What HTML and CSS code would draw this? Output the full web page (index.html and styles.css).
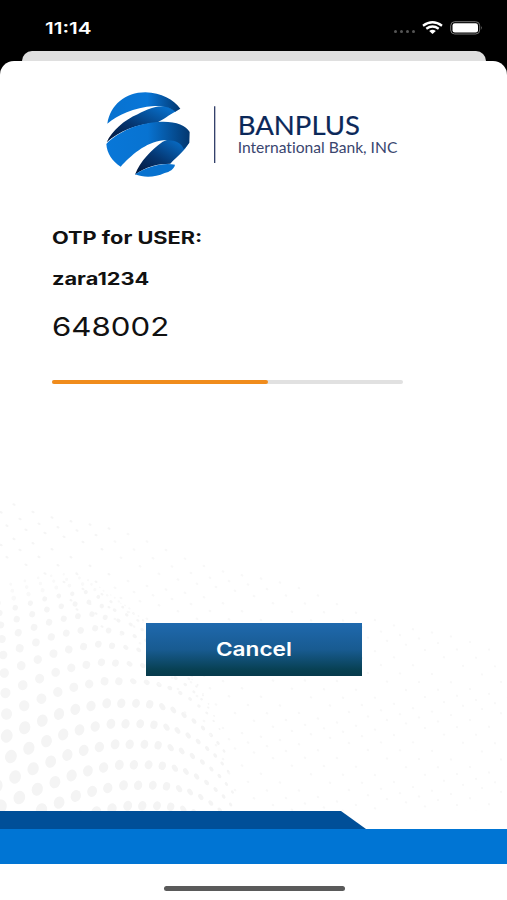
FILE: index.html
```html
<!DOCTYPE html>
<html lang="en">
<head>
    <meta charset="UTF-8">
    <meta name="viewport" content="width=device-width, initial-scale=1.0">
    <title>Banplus OTP</title>
    <link rel="stylesheet" href="styles.css">
</head>
<body>
    <header class="status-bar">
        <span class="time">11:14</span>
        <div class="status-icons">
            <div class="signal"><i></i><i></i><i></i><i></i></div>
            <svg class="wifi" viewBox="0 0 21 13" width="21" height="13">
                <g fill="none" stroke="#fff" stroke-width="2.3">
                    <path d="M1 4.7 Q10.500 -2.300 20 4.700"/>
                    <path d="M4.300 7.800 Q10.500 3.300 16.700 7.800"/>
                </g>
                <path d="M7.200 10 Q10.500 7.500 13.800 10 L10.500 12.900 Z" fill="#fff"/>
            </svg>
            <svg class="battery" viewBox="0 0 33 14" width="33" height="14">
                <rect x="0.700" y="0.700" width="29" height="12.300" rx="4" fill="none" stroke="#777" stroke-width="1"/>
                <rect x="2.500" y="2.300" width="25.500" height="9.200" rx="2.300" fill="#fff"/>
                <path d="M31 5 Q32.600 6.800 31 8.700 Z" fill="#777"/>
            </svg>
        </div>
    </header>

    <div class="back-card"></div>

    <main class="sheet">
        <svg class="dots" id="dots" viewBox="0 0 507 750" width="507" height="750"></svg>

        <svg class="logo" viewBox="0 0 930 300" width="310" height="100">
            <defs>
                <linearGradient id="top" x1="0" y1="0.500" x2="1" y2="0.500">
                    <stop offset="0" stop-color="#0872cf"/>
                    <stop offset="0.550" stop-color="#0876d8"/>
                    <stop offset="1" stop-color="#03376f"/>
                </linearGradient>
                <linearGradient id="fold" x1="0" y1="1" x2="0.900" y2="0">
                    <stop offset="0" stop-color="#021538"/>
                    <stop offset="0.450" stop-color="#05356f"/>
                    <stop offset="1" stop-color="#0874d2"/>
                </linearGradient>
                <linearGradient id="band" x1="0" y1="0.500" x2="1" y2="0.500">
                    <stop offset="0" stop-color="#0877d8"/>
                    <stop offset="0.500" stop-color="#0873d1"/>
                    <stop offset="1" stop-color="#03376f"/>
                </linearGradient>
            </defs>
            <path d="M35 172 C50 138 88 105 128 88 C155 72 185 62 215 63 L243 79 C222 90 203 106 186 113 C125 116 72 138 35 172 Z" fill="url(#fold)"/>
            <path d="M37 116 C46 60 91 22 151 22 C200 23 235 44 256 71 L241 80 C227 68 210 61 178 63 C115 67 68 91 37 116 Z" fill="url(#top)"/>
            <path d="M120 269 C137 226 168 196 203 170 C237 155 261 160 282 172 C270 198 248 213 226 236 C190 236 150 245 120 269 Z" fill="url(#fold)"/>
            <path d="M34 177 C67 142 128 114 190 111 C239 108 272 120 284 141 L283 173 C278 180 272 187 266 192 C259 172 238 163 205 166 C150 172 107 213 77 245 C51 228 36 205 34 177 Z" fill="url(#band)"/>
            <path d="M120 268 C153 245 205 231 240 239 C237 253 224 260 209 264 C179 278 146 278 120 268 Z" fill="#0872cf"/>
            <path d="M359 64 V234" stroke="#34416b" stroke-width="4"/>
            <text class="logo-name" x="428" y="150" textLength="367" lengthAdjust="spacingAndGlyphs">BANPLUS</text>
            <text class="logo-sub" x="428" y="205" textLength="479" lengthAdjust="spacingAndGlyphs">International Bank, INC</text>
        </svg>

        <section class="otp">
            <p class="otp-title">OTP for USER:</p>
            <p class="otp-user">zara1234</p>
            <p class="otp-code">648002</p>
            <div class="progress"><div class="progress-fill"></div></div>
        </section>

        <button class="cancel" type="button"><span>Cancel</span></button>

        <footer class="bottom">
            <div class="band-dark"></div>
            <div class="band-blue"></div>
            <div class="home-indicator"></div>
        </footer>
    </main>

    <script src="dots.js"></script>
</body>
</html>
```
FILE: styles.css
```css
* {
    box-sizing: border-box;
}
body {
    margin: 0;
    height: 900px;
    overflow: hidden;
    background-color: #000;
    color: #111;
    font-family: Inter, "Liberation Sans", sans-serif;
    display: flex;
    flex-direction: column;
}
.status-bar {
    height: 51px;
    flex: none;
    padding: 4px 24px 0 45px;
    display: flex;
    align-items: center;
    justify-content: space-between;
    color: #fff;
}
.time {
    font-size: 16px;
    font-weight: 600;
    transform: scaleX(1.290);
    transform-origin: left;
}
.status-icons {
    display: flex;
    align-items: center;
}
.signal {
    display: flex;
    gap: 3px;
    margin: 8px 7px 0 0;
}
.signal i {
    width: 3px;
    height: 3px;
    border-radius: 50%;
    background-color: #555;
}
.wifi {
    margin-right: 7px;
}
.back-card {
    flex: none;
    height: 10px;
    margin: 0 21px 0 22px;
    background-color: #dfdfdf;
    border-radius: 11px 11px 0 0;
}
.sheet {
    position: relative;
    flex: 1;
    display: flex;
    flex-direction: column;
    background-color: #fff;
    border-radius: 14px 14px 0 0;
    overflow: hidden;
}
.dots {
    position: absolute;
    top: 0;
    left: 0;
}
.logo {
    flex: none;
    margin: 24px 0 0 95px;
}
.logo-name {
    font-family: Lato, sans-serif;
    font-size: 80px;
    font-weight: 400;
    fill: #0b2859;
    stroke: #0b2859;
    stroke-width: 0.500px;
}
.logo-sub {
    font-family: Lato, sans-serif;
    font-size: 43px;
    font-variant-ligatures: none;
    fill: #3a466f;
}
.otp {
    margin: 41px 104px 0 52px;
}
.otp p {
    margin: 0;
    width: max-content;
    transform-origin: left;
}
.otp .otp-title,
.otp .otp-user {
    font-size: 17px;
    font-weight: 700;
    line-height: 24px;
    transform: scaleX(1.280);
}
.otp .otp-user {
    margin-top: 17px;
}
.otp .otp-code {
    margin-top: 18px;
    font-size: 26px;
    line-height: 36px;
    transform: scaleX(1.200);
}
.progress {
    margin-top: 35px;
    height: 4px;
    border-radius: 2px;
    background-color: #e1e1e1;
}
.progress-fill {
    width: 61.500%;
    height: 100%;
    border-radius: 2px;
    background-color: #f08c1c;
}
.cancel {
    position: relative;
    align-self: center;
    width: 216px;
    height: 53px;
    margin-top: 239px;
    border: none;
    background: linear-gradient(#1f69ae, #185b91 50%, #073f50 90%, #073a4c);
    color: #fff;
    font-family: inherit;
    font-size: 19px;
    font-weight: 600;
}
.cancel span {
    display: inline-block;
    transform: scaleX(1.190);
}
.bottom {
    position: relative;
    margin-top: auto;
    height: 89px;
    display: flex;
    flex-direction: column;
    background: linear-gradient(transparent 18px, #fff 18px);
}
.band-dark {
    width: 366px;
    height: 18px;
    background-color: #004f98;
    clip-path: polygon(0 0, 341px 0, 100% 100%, 0 100%);
}
.band-blue {
    height: 35px;
    background-color: #0075d4;
}
.home-indicator {
    width: 181px;
    height: 5px;
    margin: 22px 0 0 164px;
    border-radius: 3px;
    background-color: #5a5a5a;
}
```
FILE: dots.js
```js
// halftone wave behind the content, rows of dots stepping up and fading out
const svg = document.getElementById("dots");
const row = [
    [-30, 755], [-12, 745], [6.7, 736], [24.7, 727.7], [42.3, 720.7], [59, 714], [75.3, 709.3],
    [91, 706], [106.7, 703.3], [121.3, 703.3], [136, 703.3], [149.7, 704.3], [162.3, 706.7],
    [173.3, 710], [184, 715], [194, 721], [203, 728], [211, 735], [218, 743], [224, 751]
];

function dot(x, y, rx, ry, angle, color) {
    const e = document.createElementNS("http://www.w3.org/2000/svg", "ellipse");
    e.setAttribute("rx", rx);
    e.setAttribute("ry", ry);
    e.setAttribute("fill", color);
    e.setAttribute("transform", `translate(${x} ${y - 61}) rotate(${angle})`);
    svg.appendChild(e);
}

// big dots going down
for (let r = 0; r < 6; r++) {
    row.forEach(([x, y], i) => {
        const size = Math.max(1.2, 7.4 - i * 0.29);
        dot(x + r * 4.2, y + r * 20.5, size * (i > 11 ? 0.65 : 0.85), size, i > 11 ? -35 : 18, "#f4f4f4");
    });
}

// rows above get closer together and smaller
const steps = [22, 43, 63, 81, 97, 111, 123, 133, 141, 148];
steps.forEach((up, r) => {
    const squeeze = 1 - (r + 1) * 0.02;
    row.forEach(([x, y], i) => {
        const size = Math.max(0.9, (7 - i * 0.3) * (1 - r * 0.08));
        const flat = 1 - r * 0.06;
        dot(x * squeeze - r, 736 - up + (y - 736) * flat + Math.max(0, i - 8) * r * 0.8,
            size * 0.85, size * (i > 9 ? 0.65 : 0.9), i > 9 ? 35 : 15, r > 6 ? "#f9f9f9" : "#f5f5f5");
    });
});

// fine specks outside the wave
for (let r = 0; r < 22; r++) {
    for (let c = 0; c < 28; c++) {
        const x = c * 19 + (r % 3) * 6 - 5;
        const y = 496 + r * 13 + c * 6 + Math.sin(c * 0.7 + r) * 4;
        const edge = 570 + x * 0.35 + x * x * 0.0025;
        if (y > 826 || (x < 250 && y > edge)) continue;
        dot(x, y, 1.7 - c * 0.02, 1.1, 25, x < 110 ? "#f5f5f5" : "#f8f8f8");
    }
}
```
